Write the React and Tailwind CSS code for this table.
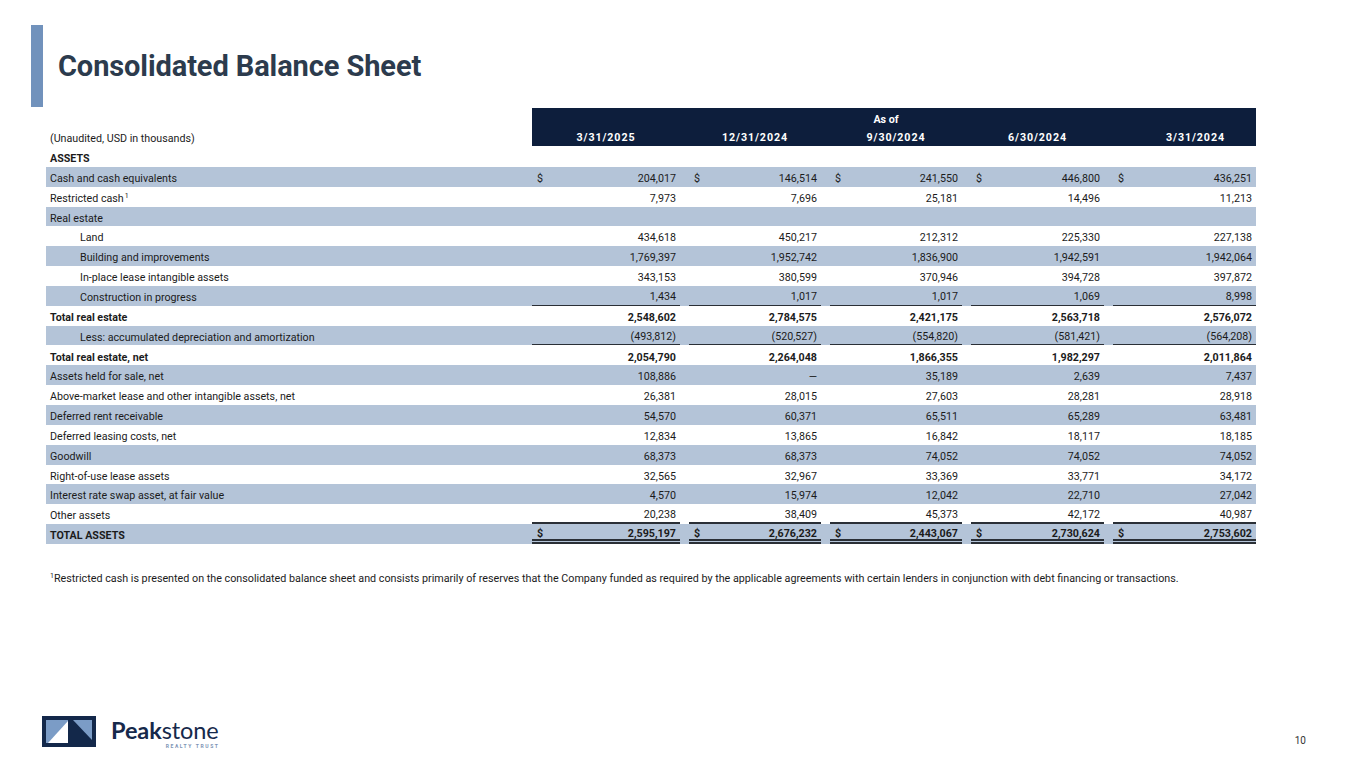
import React from "react";

const COLS = [
  "w-[148px]",
  "w-[132px]",
  "w-[132px]",
  "w-[133px]",
  "w-[143px]",
];

const rows = [
  { label: "ASSETS", bold: true },
  { label: "Cash and cash equivalents", dollar: true, v: ["204,017", "146,514", "241,550", "446,800", "436,251"] },
  { label: "Restricted cash", sup: true, v: ["7,973", "7,696", "25,181", "14,496", "11,213"] },
  { label: "Real estate" },
  { label: "Land", indent: true, v: ["434,618", "450,217", "212,312", "225,330", "227,138"] },
  { label: "Building and improvements", indent: true, v: ["1,769,397", "1,952,742", "1,836,900", "1,942,591", "1,942,064"] },
  { label: "In-place lease intangible assets", indent: true, v: ["343,153", "380,599", "370,946", "394,728", "397,872"] },
  { label: "Construction in progress", indent: true, line: "single", v: ["1,434", "1,017", "1,017", "1,069", "8,998"] },
  { label: "Total real estate", bold: true, v: ["2,548,602", "2,784,575", "2,421,175", "2,563,718", "2,576,072"] },
  { label: "Less: accumulated depreciation and amortization", indent: true, line: "single", v: ["(493,812)", "(520,527)", "(554,820)", "(581,421)", "(564,208)"] },
  { label: "Total real estate, net", bold: true, v: ["2,054,790", "2,264,048", "1,866,355", "1,982,297", "2,011,864"] },
  { label: "Assets held for sale, net", v: ["108,886", "—", "35,189", "2,639", "7,437"] },
  { label: "Above-market lease and other intangible assets, net", v: ["26,381", "28,015", "27,603", "28,281", "28,918"] },
  { label: "Deferred rent receivable", v: ["54,570", "60,371", "65,511", "65,289", "63,481"] },
  { label: "Deferred leasing costs, net", v: ["12,834", "13,865", "16,842", "18,117", "18,185"] },
  { label: "Goodwill", v: ["68,373", "68,373", "74,052", "74,052", "74,052"] },
  { label: "Right-of-use lease assets", v: ["32,565", "32,967", "33,369", "33,771", "34,172"] },
  { label: "Interest rate swap asset, at fair value", v: ["4,570", "15,974", "12,042", "22,710", "27,042"] },
  { label: "Other assets", line: "thick", v: ["20,238", "38,409", "45,373", "42,172", "40,987"] },
  { label: "TOTAL ASSETS", bold: true, dollar: true, line: "double", v: ["2,595,197", "2,676,232", "2,443,067", "2,730,624", "2,753,602"] },
];

function Gap() {
  return <div className="w-[9px] shrink-0" />;
}

function Row({ r, i }) {
  const band = i % 2 === 1 ? "bg-[#b4c4d8]" : "";
  const weight = r.bold ? "font-bold" : "font-normal";
  let lineCls = "";
  if (r.line === "single") lineCls = "border-b border-[#2a2f36]";
  if (r.line === "thick") lineCls = "border-b-[2px] border-[#2a2f36]";
  if (r.line === "double") lineCls = "border-b-[5px] border-double border-[#2a2f36]";
  return (
    <div className={`flex h-[19.85px] items-stretch leading-none ${band}`}>
      <div className={`w-[486px] shrink-0 flex items-center pt-[5px] ${r.indent ? "pl-[34px]" : "pl-[4px]"} ${weight}`}>
        <span>
          {r.label}
          {r.sup && <sup className="text-[7px] top-[-4px] ml-[1px]">1</sup>}
        </span>
      </div>
      {COLS.map((w, c) => (
        <React.Fragment key={c}>
          {c > 0 && <Gap />}
          <div className={`${w} shrink-0 flex items-center justify-between pt-[5px] pl-[5px] pr-[4px] ${weight} ${r.v ? lineCls : ""}`}>
            <span>{r.dollar ? "$" : ""}</span>
            <span>{r.v ? r.v[c] : ""}</span>
          </div>
        </React.Fragment>
      ))}
    </div>
  );
}

function Logo() {
  return (
    <div className="flex items-end">
      <svg width="54" height="31" viewBox="0 0 54 31" className="shrink-0">
        <rect x="0" y="0" width="54" height="31" fill="#13284a" />
        <rect x="4" y="4" width="46" height="23" fill="#7b9cc6" />
        <polygon points="6,27 26,5 26,27" fill="#ffffff" />
        <polygon points="26,4 31,4 50,24 50,27 26,27" fill="#13284a" />
      </svg>
      <div className="ml-[15px] flex flex-col items-end leading-none mb-[-2px]">
        <div className="text-[23.5px] text-[#16294b] font-['Lato',sans-serif] tracking-[-0.1px]">
          <span className="font-bold">Peak</span>
          <span className="font-normal">stone</span>
        </div>
        <div className="text-[5px] font-bold tracking-[1.6px] text-[#7d93b5] mt-[2px] mr-[-1px]">REALTY TRUST</div>
      </div>
    </div>
  );
}

export default function App() {
  return (
    <div className="w-[1365px] h-[768px] bg-white flex flex-col font-['Roboto',sans-serif] text-[10.7px] text-[#1b1b1b] overflow-hidden">
      <div className="flex items-center pt-[25px] pl-[31px]">
        <div className="w-[12px] h-[82px] bg-[#7192bc] shrink-0" />
        <h1 className="ml-[15px] text-[29px] font-bold text-[#2c3b4d] tracking-[-0.1px] leading-none">
          Consolidated Balance Sheet
        </h1>
      </div>

      <div className="ml-[46px] mt-[1px] w-[1210px]">
        <div className="flex h-[38px] leading-none">
          <div className="w-[486px] shrink-0 flex items-end pl-[4px]">
            <div className="h-[19px] flex items-center pt-[6px]">(Unaudited, USD in thousands)</div>
          </div>
          <div className="flex-1 bg-[#0d1e3c] text-white font-bold flex flex-col">
            <div className="h-[19px] flex items-center justify-center pt-[5px] pr-[16px]">As of</div>
            <div className="h-[19px] flex items-center pt-[4px] tracking-[0.9px]">
              <div className="w-[148px] text-center">3/31/2025</div>
              <Gap />
              <div className="w-[132px] text-center">12/31/2024</div>
              <Gap />
              <div className="w-[132px] text-center">9/30/2024</div>
              <Gap />
              <div className="w-[133px] text-center">6/30/2024</div>
              <Gap />
              <div className="w-[143px] text-center pl-[22px]">3/31/2024</div>
            </div>
          </div>
        </div>
        <div className="mt-[1px]">
          {rows.map((r, i) => (
            <Row key={i} r={r} i={i} />
          ))}
        </div>
      </div>

      <div className="ml-[50px] mt-[27px] text-[10.75px]">
        <sup className="text-[7px] top-[-4px]">1</sup>
        Restricted cash is presented on the consolidated balance sheet and consists primarily of reserves that the Company funded as required by the applicable agreements with certain lenders in conjunction with debt financing or transactions.
      </div>

      <div className="mt-auto mb-[21px] flex items-end justify-between pl-[42px] pr-[59px]">
        <Logo />
        <div className="text-[10px] text-[#333] mb-[-1px]">10</div>
      </div>
    </div>
  );
}
